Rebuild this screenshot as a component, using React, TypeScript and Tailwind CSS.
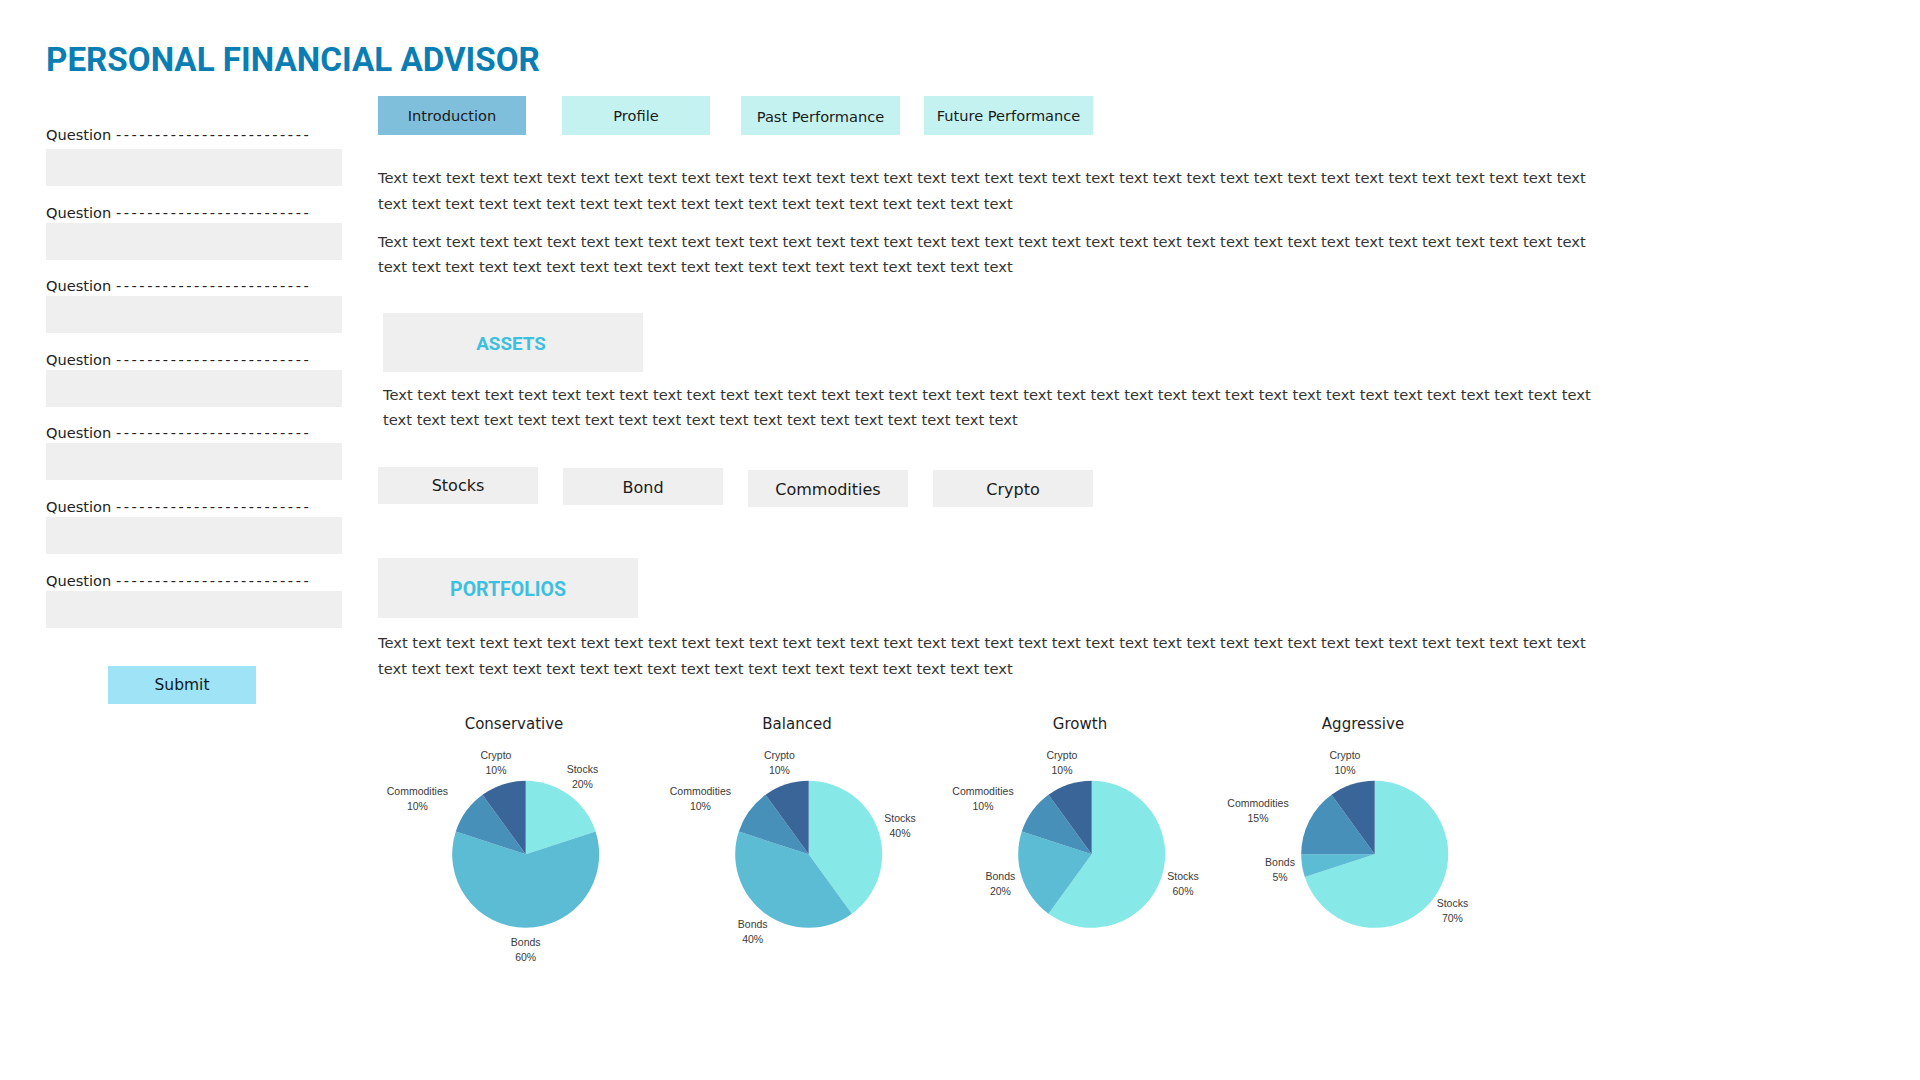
import React from "react";

const TEXT = ["Text", ...Array(54).fill("text")].join(" ");

const tabs = [
  { label: "Introduction", cls: "w-[148px] bg-[#7fbfdc]" },
  { label: "Profile", cls: "w-[148px] ml-[36px] bg-[#c4f2f1]" },
  { label: "Past Performance", cls: "w-[159px] ml-[31px] bg-[#c4f2f1] pt-[2px]" },
  { label: "Future Performance", cls: "w-[169px] ml-[24px] bg-[#c4f2f1]" },
];

const assets = [
  { label: "Stocks", cls: "mt-0" },
  { label: "Bond", cls: "mt-[1.5px]" },
  { label: "Commodities", cls: "mt-[3.5px]" },
  { label: "Crypto", cls: "mt-[3.5px]" },
];

const COLORS = ["#87e8e8", "#5cbcd3", "#4690b9", "#3a6598"];
const NAMES = ["Stocks", "Bonds", "Commodities", "Crypto"];

type Chart = {
  title: string;
  values: number[];
  labels: [number, number][]; // dx, dy of first label line, from pie centre
};

const charts: Chart[] = [
  {
    title: "Conservative",
    values: [20, 60, 10, 10],
    labels: [[56.7, -84.7], [0, 88.3], [-108.3, -63.3], [-29.7, -99]],
  },
  {
    title: "Balanced",
    values: [40, 40, 10, 10],
    labels: [[91.3, -36.3], [-56, 70.3], [-108.3, -63.3], [-29.3, -99]],
  },
  {
    title: "Growth",
    values: [60, 20, 10, 10],
    labels: [[91.3, 22.3], [-91.3, 22.3], [-108.7, -63], [-29.7, -99]],
  },
  {
    title: "Aggressive",
    values: [70, 5, 15, 10],
    labels: [[77.7, 49.3], [-94.7, 8.3], [-116.7, -51], [-29.7, -99]],
  },
];

function slice(cx: number, cy: number, r: number, a0: number, a1: number) {
  const p = (f: number) => [cx + r * Math.sin(2 * Math.PI * f), cy - r * Math.cos(2 * Math.PI * f)];
  const [x0, y0] = p(a0);
  const [x1, y1] = p(a1);
  const large = a1 - a0 > 0.5 ? 1 : 0;
  return `M${cx},${cy} L${x0},${y0} A${r},${r} 0 ${large} 1 ${x1},${y1} Z`;
}

function Pie({ chart }: { chart: Chart }) {
  const cx = 147.7;
  const cy = 121.3;
  const r = 73.5;
  let acc = 0;
  return (
    <div className="w-[283px] shrink-0">
      <p className="h-[20px] pr-[11px] pt-[1px] text-center text-[15px] leading-[20px] text-[#1f1f1f]">{chart.title}</p>
      <svg width="283" height="240" viewBox="0 0 283 240">
        {chart.values.map((v, i) => {
          const a0 = acc / 100;
          acc += v;
          return <path key={i} d={slice(cx, cy, r, a0, acc / 100)} fill={COLORS[i]} />;
        })}
        {chart.labels.map(([dx, dy], i) => (
          <text
            key={i}
            x={cx + dx}
            textAnchor="middle"
            fontSize="10.5"
            fill="#3a3a3a"
            fontFamily="'Liberation Sans', Arial, sans-serif"
          >
            <tspan x={cx + dx} y={cy + dy + 3.8}>{NAMES[i]}</tspan>
            <tspan x={cx + dx} y={cy + dy + 18.8}>{chart.values[i]}%</tspan>
          </text>
        ))}
      </svg>
    </div>
  );
}

export default function App() {
  return (
    <div className="min-h-screen bg-white font-['DejaVu_Sans',sans-serif] text-[#333]">
      <h1 className="pl-[46px] pt-[40px] font-['Roboto',sans-serif] text-[33.2px] font-bold leading-[40px] text-[#0a7eb4]">
        PERSONAL FINANCIAL ADVISOR
      </h1>

      <div className="mt-[16px] flex items-start">
        {/* questionnaire */}
        <aside className="w-[342px] shrink-0 pl-[46px] pt-[28.7px]">
          {Array.from({ length: 7 }).map((_, i) => (
            <div key={i} className={i === 0 ? "" : "mt-[16.6px]"}>
              <p className={`h-[20px] whitespace-nowrap text-[14.6px] leading-[20px] text-[#222] ${i === 0 ? "mb-[4.3px]" : ""}`}>
                Question <span className="tracking-[2.55px]">-------------------------</span>
              </p>
              <div className="h-[37px] w-[296px] bg-[#efefef]" />
            </div>
          ))}
          <button className="ml-[62px] mt-[38px] h-[38px] w-[148px] bg-[#9ee3f6] pt-[2px] text-[15.5px] text-[#0d1b24]">
            Submit
          </button>
        </aside>

        {/* content */}
        <main className="ml-[36px] flex-1">
          <div className="flex items-start">
            {tabs.map((t) => (
              <button key={t.label} className={`h-[39px] text-[14.6px] text-[#1a1a1a] ${t.cls}`}>
                {t.label}
              </button>
            ))}
          </div>

          <p className="mt-[30px] w-[1235px] text-[14.7px] leading-[25.5px]">{TEXT}</p>
          <p className="mt-[12.5px] w-[1235px] text-[14.7px] leading-[25.5px]">{TEXT}</p>

          <div className="ml-[5px] mt-[33px] flex h-[59px] w-[260px] items-center justify-center bg-[#efefef] pt-[5px] pr-[4px]">
            <span className="font-['Roboto',sans-serif] text-[18.8px] font-bold text-[#3dbfe0]">ASSETS</span>
          </div>
          <p className="ml-[5px] mt-[10px] w-[1235px] text-[14.7px] leading-[25.5px]">{TEXT}</p>

          <div className="mt-[34px] flex items-start gap-[25px]">
            {assets.map((a) => (
              <div key={a.label} className={`flex h-[37px] w-[160px] items-center justify-center bg-[#efefef] pt-[2px] text-[16px] text-[#1a1a1a] ${a.cls}`}>
                {a.label}
              </div>
            ))}
          </div>

          <div className="mt-[51px] flex h-[60px] w-[260px] items-center justify-center bg-[#efefef] pt-[3px]">
            <span className="font-['Roboto',sans-serif] text-[19.5px] font-bold text-[#3dbfe0]">PORTFOLIOS</span>
          </div>
          <p className="mt-[12px] w-[1235px] text-[14.7px] leading-[25.5px]">{TEXT}</p>

          <div className="mt-[32px] flex">
            {charts.map((c) => (
              <Pie key={c.title} chart={c} />
            ))}
          </div>
        </main>
      </div>
    </div>
  );
}
